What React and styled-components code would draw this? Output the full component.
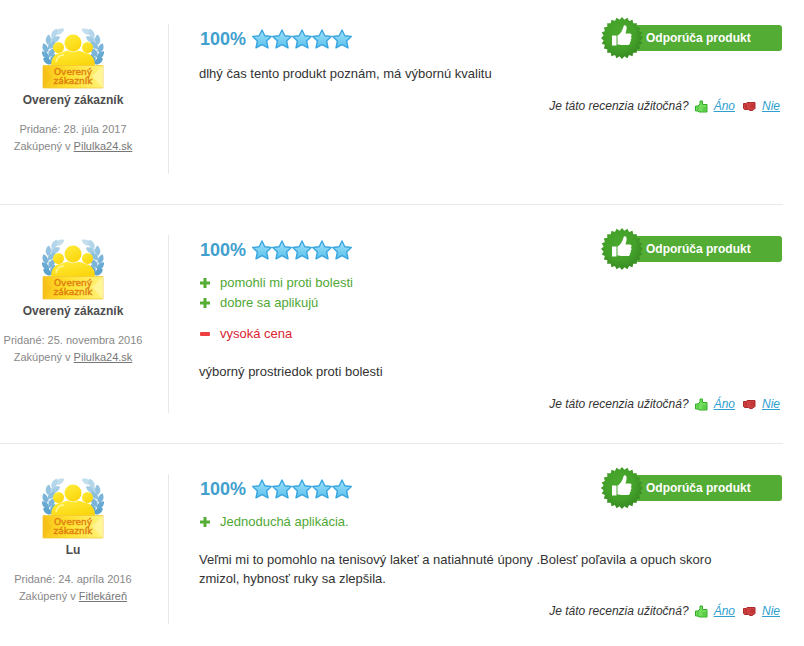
import React from 'react'
import styled, { createGlobalStyle } from 'styled-components'

const reviews = [
  {
    id: 1,
    name: 'Overený zákazník',
    added: '28. júla 2017',
    shop: 'Pilulka24.sk',
    rating: 100,
    pros: [],
    cons: [],
    text: 'dlhý čas tento produkt poznám, má výbornú kvalitu'
  },
  {
    id: 2,
    name: 'Overený zákazník',
    added: '25. novembra 2016',
    shop: 'Pilulka24.sk',
    rating: 100,
    pros: ['pomohli mi proti bolesti', 'dobre sa aplikujú'],
    cons: ['vysoká cena'],
    text: 'výborný prostriedok proti bolesti'
  },
  {
    id: 3,
    name: 'Lu',
    added: '24. apríla 2016',
    shop: 'Fitlekáreň',
    rating: 100,
    pros: ['Jednoduchá aplikácia.'],
    cons: [],
    text: 'Veľmi mi to pomohlo na tenisový lakeť a natiahnuté úpony .Bolesť poľavila a opuch skoro zmizol, hybnosť ruky sa zlepšila.'
  }
]

// leaves of the left branch: base x, base y, angle from upright, colour
const leaves = [
  [13, 8, 62, '#c3deed'],
  [10, 12, 28, '#b4d6ea'],
  [9, 16, 60, '#a4cde5'],
  [6, 19, 4, '#93c3e0'],
  [6, 23, 45, '#8cbfdd'],
  [5, 27, -20, '#7ab4d8'],
  [7, 31, 32, '#7ab4d8'],
  [7, 33, -42, '#69aad2'],
  [10, 38, 14, '#69aad2'],
  [10, 38, -58, '#5ba2cd']
]

const Branch = () => (
  <g>
    <path d="M13 8 Q1 20 11 38" fill="none" stroke="#9cc8e2" strokeWidth="1" />
    {leaves.map(([x, y, angle, color], i) => (
      <path
        key={i}
        d="M0 0 C-3.800 -3 -3.200 -7.500 0 -10.500 C3.200 -7.500 3.800 -3 0 0 Z"
        fill={color}
        transform={`translate(${x} ${y}) rotate(${angle})`}
      />
    ))}
  </g>
)

const CustomerBadge = () => (
  <Avatar viewBox="0 0 62 64" role="img" aria-label="Overený zákazník">
    <defs>
      <linearGradient id="gold" x1="0" y1="0" x2="0.6" y2="1">
        <stop offset="0" stopColor="#ffee3c" />
        <stop offset="1" stopColor="#fbd60e" />
      </linearGradient>
      <linearGradient id="plate" x1="0" y1="0" x2="1" y2="0">
        <stop offset="0" stopColor="#f8c31a" />
        <stop offset="0.4" stopColor="#ffe02c" />
        <stop offset="1" stopColor="#fff27a" />
      </linearGradient>
    </defs>
    <Branch />
    <g transform="translate(62 0) scale(-1 1)"><Branch /></g>
    <path d="M9 40 C9 32 13 27 19 27 C22 25 26 24.500 31 24.500 C36 24.500 40 25 43 27 C49 27 53 32 53 40 Z" fill="url(#gold)" />
    <circle cx="16.500" cy="21.500" r="5.500" fill="url(#gold)" />
    <circle cx="45.500" cy="21.500" r="5.500" fill="url(#gold)" />
    <circle cx="31" cy="17" r="9.200" fill="#fff" opacity="0.6" />
    <circle cx="31" cy="17" r="8.500" fill="url(#gold)" />
    <path d="M14 36 C15 31 18 29 22 29" fill="none" stroke="#fff79a" strokeWidth="1.500" />
    <path d="M1 39.500 H61 V62 H1 Z" fill="url(#plate)" stroke="#f3c93a" strokeWidth="0.8" />
    <path d="M61 40 L50 50 L61 62 Z" fill="#fff8a8" opacity="0.7" />
    <path d="M1 62 L10 51 L1 40 Z" fill="#f5b912" opacity="0.4" />
    <BadgeText x="31" y="49">Overený</BadgeText>
    <BadgeText x="31" y="58">zákazník</BadgeText>
  </Avatar>
)

const Star = () => (
  <svg width="20" height="20" viewBox="0 0 20 20" aria-hidden="true">
    <defs>
      <linearGradient id="star" x1="0" y1="0" x2="0" y2="1">
        <stop offset="0" stopColor="#a3e2f8" />
        <stop offset="1" stopColor="#58c0ec" />
      </linearGradient>
    </defs>
    <path
      d="M10 1 L12.800 6.800 L19.300 7.500 L14.600 12 L16 18.800 L10 15.600 L4 18.800 L5.400 12 L0.700 7.500 L7.200 6.800 Z"
      fill="url(#star)"
      stroke="#3aa6e0"
      strokeWidth="1.400"
      strokeLinejoin="round"
    />
  </svg>
)

const sealPoints = Array.from({ length: 48 }, (_, i) => {
  const r = i % 2 ? 18.5 : 21
  const a = (i * Math.PI) / 24
  return `${21 + r * Math.sin(a)},${21 - r * Math.cos(a)}`
}).join(' ')

const Seal = () => (
  <SealIcon viewBox="0 0 42 42" aria-hidden="true">
    <defs>
      <radialGradient id="seal" cx="0.45" cy="0.4" r="0.6">
        <stop offset="0" stopColor="#4bab2d" />
        <stop offset="0.6" stopColor="#43a029" />
        <stop offset="1" stopColor="#378a22" />
      </radialGradient>
    </defs>
    <polygon points={sealPoints} fill="url(#seal)" />
    <path d="M11 18.500 H15.500 V28.500 H11 Z" fill="#fff" />
    <path
      d="M16.500 18.500 C19 17.500 21.500 13.500 22.500 9.500 C23 7.500 25.800 8 25.600 11 C25.500 13 25 15 24.500 16.500 H28.500 C31 16.500 31 19 29.800 19.700 C31 20.500 30.600 22.300 29.500 22.700 C30.300 23.600 29.800 25.200 28.800 25.500 C29.400 26.800 28.300 28 27 28 H20 C18.500 28 17.500 27.500 16.500 27.300 Z"
      fill="#fff"
    />
  </SealIcon>
)

const ThumbUp = () => (
  <ThumbIcon viewBox="0 0 14 14" aria-hidden="true">
    <path
      d="M0.500 6 H3 L5 4 V1 H7.500 V4.500 H12 V12 H4 L3 11 H0.500 Z"
      fill="#72dd5c"
      stroke="#35ad29"
      strokeLinejoin="round"
    />
    <path d="M3 6.500 V10.500 M7.500 8 H11.500 M7.500 10 H11.500" stroke="#35ad29" strokeWidth="0.7" />
  </ThumbIcon>
)

const ThumbDown = () => (
  <ThumbIcon viewBox="0 0 14 14" aria-hidden="true">
    <path
      d="M0.500 3.500 H3 L4 2.500 H12 V8.500 L11 9.500 H9.500 V10.500 H7 L5.500 9.500 H1.500 L0.500 8.500 Z"
      fill="#cf4140"
      stroke="#ad2a2c"
      strokeLinejoin="round"
    />
    <path d="M3 4 V8.500 M7.500 5 H11.500 M7.500 7 H11.500" stroke="#a32426" strokeWidth="0.7" />
  </ThumbIcon>
)

const Review = ({ review }) => (
  <Item>
    <Author>
      <CustomerBadge />
      <Name>{review.name}</Name>
      <Meta>Pridané: {review.added}</Meta>
      <Meta>Zakúpený v <ShopLink href="#">{review.shop}</ShopLink></Meta>
    </Author>
    <Content>
      <Header>
        <Percent>{review.rating}%</Percent>
        <Stars>
          {[1, 2, 3, 4, 5].map(n => <Star key={n} />)}
        </Stars>
        <Recommend><Seal />Odporúča produkt</Recommend>
      </Header>
      {review.pros.length > 0 && (
        <Points $color="#4fa833" $gap="8px">
          {review.pros.map(item => (
            <Point key={item}>
              <svg width="12" height="12" viewBox="0 0 12 12" aria-hidden="true">
                <path d="M4.500 1 H7.500 V4.500 H11 V7.500 H7.500 V11 H4.500 V7.500 H1 V4.500 H4.500 Z" fill="#55ad35" />
              </svg>
              {item}
            </Point>
          ))}
        </Points>
      )}
      {review.cons.length > 0 && (
        <Points $color="#da2430" $gap="11px">
          {review.cons.map(item => (
            <Point key={item}>
              <svg width="12" height="12" viewBox="0 0 12 12" aria-hidden="true">
                <rect x="1" y="4" width="10" height="4" rx="1" fill="#ee4043" />
              </svg>
              {item}
            </Point>
          ))}
        </Points>
      )}
      <Text $afterPoints={review.pros.length + review.cons.length > 0}>{review.text}</Text>
      <Useful>
        Je táto recenzia užitočná?
        <Vote><ThumbUp /><VoteLink href="#">Áno</VoteLink></Vote>
        <Vote><ThumbDown /><VoteLink href="#">Nie</VoteLink></Vote>
      </Useful>
    </Content>
  </Item>
)

const App = () => (
  <>
    <GlobalStyle />
    <List>
      {reviews.map(review => <Review key={review.id} review={review} />)}
    </List>
  </>
)

const GlobalStyle = createGlobalStyle`
  body {
    margin: 0;
    background: #fff;
    color: #333;
    font-family: Arial, 'Liberation Sans', sans-serif;
    font-size: 13px;
  }
`
const List = styled.main`
  margin-right: 21px;
`
const Item = styled.article`
  display: flex;
  padding: 30px 0;
  border-bottom: 1px solid #e9e9e9;
  &:first-child {
    padding-top: 24px;
  }
  &:last-child {
    padding-bottom: 20px;
    border-bottom: none;
  }
`
const Author = styled.div`
  display: flex;
  flex-direction: column;
  align-items: center;
  flex: 0 0 146px;
  min-height: 150px;
  padding-right: 22px;
  border-right: 1px solid #e9e9e9;
`
const Avatar = styled.svg`
  width: 62px;
  height: 64px;
  margin-top: 2px;
`
const BadgeText = styled.text`
  font-family: 'DejaVu Sans', sans-serif;
  font-size: 9px;
  text-anchor: middle;
  fill: #e0800f;
  stroke: #e0800f;
  stroke-width: 0.4px;
`
const Name = styled.strong`
  margin-bottom: 10px;
  color: #4d4d4d;
  font-size: 12px;
  line-height: 21px;
`
const Meta = styled.div`
  color: #888;
  font-size: 11px;
  line-height: 17px;
  white-space: nowrap;
`
const ShopLink = styled.a`
  color: #777;
`
const Content = styled.div`
  flex: 1;
  min-width: 0;
  padding-left: 30px;
`
const Header = styled.div`
  display: flex;
  align-items: center;
  height: 30px;
`
const Percent = styled.strong`
  margin: 0 6px 0 1px;
  color: #3fa0cd;
  font-size: 18px;
`
const Stars = styled.div`
  display: flex;
`
const Recommend = styled.div`
  display: flex;
  align-items: center;
  box-sizing: border-box;
  width: 161px;
  height: 26px;
  margin: 0 1px 2px auto;
  border-radius: 3px;
  background: #53ac34;
  color: #fff;
  font-size: 12px;
  font-weight: 700;
  white-space: nowrap;
`
const SealIcon = styled.svg`
  flex: none;
  width: 42px;
  height: 42px;
  margin: 0 3px 0 -20px;
`
const Points = styled.ul`
  margin: ${props => props.$gap} 0 0;
  padding: 0;
  list-style: none;
  color: ${props => props.$color};
`
const Point = styled.li`
  display: flex;
  align-items: center;
  gap: 9px;
  line-height: 20px;
`
const Text = styled.p`
  max-width: 540px;
  margin: ${props => props.$afterPoints ? '18px' : '10px'} 0 15px;
  line-height: 19px;
`
const Useful = styled.div`
  display: flex;
  justify-content: flex-end;
  align-items: center;
  gap: 6px;
  padding-right: 3px;
  font-size: 12px;
  font-style: italic;
  line-height: 17px;
`
const Vote = styled.span`
  display: flex;
  align-items: center;
  gap: 5px;
  & + & {
    margin-left: 2px;
  }
`
const ThumbIcon = styled.svg`
  width: 14px;
  height: 14px;
`
const VoteLink = styled.a`
  color: #2fa0cf;
`

export default App
